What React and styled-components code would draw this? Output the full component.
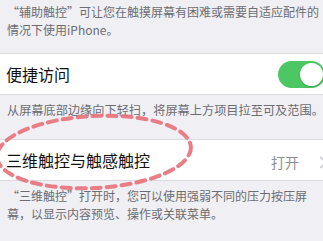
import styled, { createGlobalStyle } from "styled-components";

const Global = createGlobalStyle`
  body {
    margin: 0;
    background: #efeff4;
    font-family: "Noto Sans CJK SC", "Noto Sans", sans-serif;
  }
`;

export default function App() {
  return (
    <Page>
      <Global />
      <Note $top={3} $bottom={14}>
        “辅助触控”可让您在触摸屏幕有困难或需要自适应配件的
        <br />
        情况下使用iPhone。
      </Note>
      <Row>
        <Label>便捷访问</Label>
        <Toggle $on>
          <Knob />
        </Toggle>
      </Row>
      <Note $top={6} $bottom={20} $size={12.2}>
        从屏幕底部边缘向下轻扫，将屏幕上方项目拉至可及范围。
      </Note>
      <Row>
        <Label>三维触控与触感触控</Label>
        <Detail>
          打开
          <Chevron viewBox="0 0 8 14">
            <path d="M1 1l6 6-6 6" fill="none" stroke="#c4c4c9" strokeWidth="1.6" />
          </Chevron>
        </Detail>
      </Row>
      <Note $top={6} $bottom={20}>
        “三维触控”打开时，您可以使用强弱不同的压力按压屏
        <br />
        幕，以显示内容预览、操作或关联菜单。
      </Note>
      <Mark viewBox="0 0 323 241">
        <ellipse
          cx="94"
          cy="152"
          rx="97"
          ry="36"
          transform="rotate(-3 94 152)"
          fill="none"
          stroke="#e8707a"
          strokeWidth="4"
          strokeDasharray="9 6"
          strokeLinecap="round"
          opacity="0.9"
        />
      </Mark>
    </Page>
  );
}

const Page = styled.div`
  position: relative;
  width: 323px;
  height: 241px;
  overflow: hidden;
  background: #efeff4;
`;

const Note = styled.div`
  padding: ${(p) => p.$top}px 4px ${(p) => p.$bottom}px 7px;
  font-size: ${(p) => p.$size || 12}px;
  line-height: 18px;
  color: #6d6d72;
  white-space: nowrap;
`;

const Row = styled.div`
  display: flex;
  align-items: center;
  justify-content: space-between;
  height: 40px;
  padding-left: 6px;
  background: #fff;
  border-top: 1px solid #dcdce0;
  border-bottom: 1px solid #dcdce0;
`;

const Label = styled.span`
  font-size: 16px;
  color: #111;
`;

const Toggle = styled.div`
  flex: none;
  width: 47px;
  height: 27px;
  margin-right: -2px;
  border-radius: 14px;
  background: ${(p) => (p.$on ? "#4cc764" : "#e5e5ea")};
  display: flex;
  align-items: center;
  justify-content: ${(p) => (p.$on ? "flex-end" : "flex-start")};
  padding: 0 2px;
  box-sizing: border-box;
`;

const Knob = styled.div`
  width: 23px;
  height: 23px;
  border-radius: 50%;
  background: #fff;
  box-shadow: 0 1px 2px rgba(0, 0, 0, 0.2);
`;

const Detail = styled.span`
  display: flex;
  align-items: center;
  gap: 20px;
  margin-top: 4px;
  margin-right: -4px;
  font-size: 14px;
  color: #8e8e93;
`;

const Chevron = styled.svg`
  width: 8px;
  height: 13px;
`;

const Mark = styled.svg`
  position: absolute;
  left: 0;
  top: 0;
  width: 323px;
  height: 241px;
  pointer-events: none;
`;
